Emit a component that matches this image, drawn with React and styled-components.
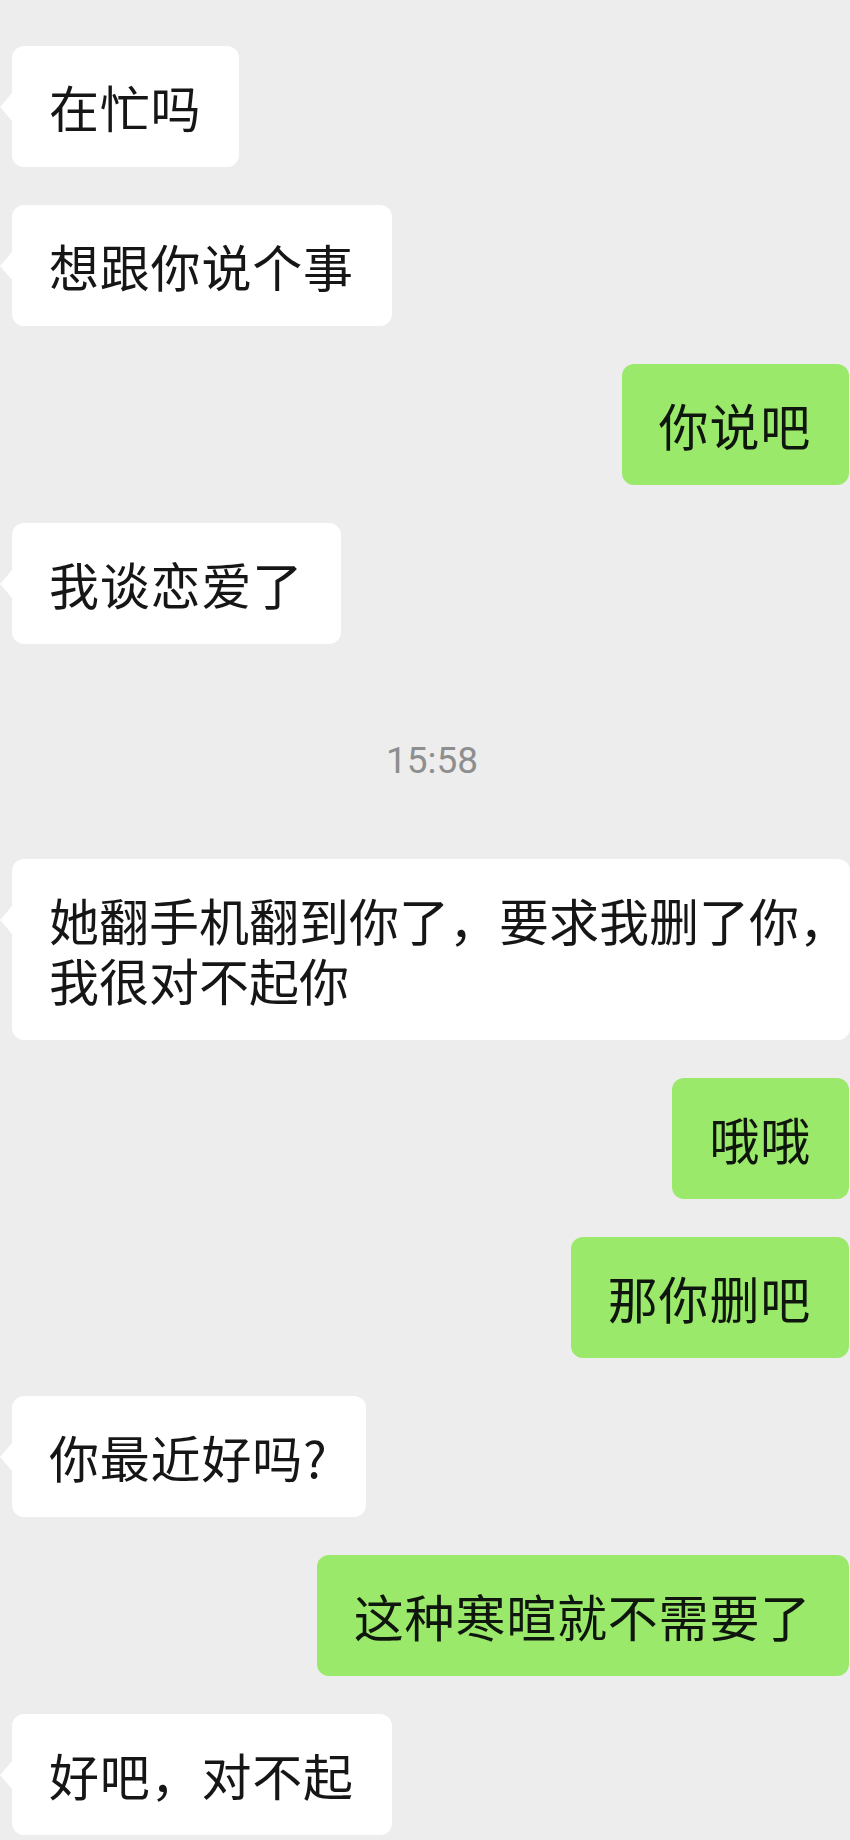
import styled, { createGlobalStyle } from 'styled-components';

const GlobalStyle = createGlobalStyle`
    html, body {
        margin: 0;
        padding: 0;
        background: #ededed;
        overflow: hidden;
    }
`;

const Chat = styled.div`
    width: 850px;
    min-height: 1840px;
    box-sizing: border-box;
    padding: 46px 0 7px;
    display: flex;
    flex-direction: column;
    gap: 38px;
    background: #ededed;
    font-family: "Noto Sans CJK SC", "Noto Sans", sans-serif;
`;

const Row = styled.div`
    display: flex;
    justify-content: ${(p) => (p.$mine ? 'flex-end' : 'flex-start')};
    padding: ${(p) => (p.$mine ? '0 1px 0 0' : '0 0 0 12px')};
`;

const Bubble = styled.div`
    position: relative;
    box-sizing: border-box;
    max-width: 838px;
    padding: 30px ${(p) => (p.$wide ? '0' : '38px')} 31px 37px;
    border-radius: 12px;
    background: ${(p) => (p.$mine ? '#9be96b' : '#ffffff')};
    color: ${(p) => (p.$mine ? '#0f160d' : '#161616')};
    font-size: 50px;
    line-height: 60px;
    letter-spacing: ${(p) => (p.$wide ? '0' : '0.8px')};
    white-space: pre-wrap;

    &::before {
        content: ${(p) => (p.$mine ? 'none' : '""')};
        position: absolute;
        left: -12px;
        top: 46px;
        width: 0;
        height: 0;
        border-top: 15px solid transparent;
        border-bottom: 15px solid transparent;
        border-right: 13px solid #ffffff;
    }
`;

const TimeLabel = styled.div`
    padding: 59px 0 40px 14px;
    text-align: center;
    font-family: Roboto, "Liberation Sans", sans-serif;
    font-size: 37px;
    line-height: 40px;
    color: #8e8e8e;
`;

const messages = [
    { id: 1, text: '在忙吗' },
    { id: 2, text: '想跟你说个事' },
    { id: 3, text: '你说吧', mine: true },
    { id: 4, text: '我谈恋爱了' },
    { id: 5, time: '15:58' },
    { id: 6, text: '她翻手机翻到你了，要求我删了你，我很对不起你', wide: true },
    { id: 7, text: '哦哦', mine: true },
    { id: 8, text: '那你删吧', mine: true },
    { id: 9, text: '你最近好吗?' },
    { id: 10, text: '这种寒暄就不需要了', mine: true },
    { id: 11, text: '好吧，对不起' },
];

function App() {
    return (
        <>
            <GlobalStyle />
            <Chat>
                {messages.map((m) =>
                    m.time ? (
                        <TimeLabel key={m.id}>{m.time}</TimeLabel>
                    ) : (
                        <Row key={m.id} $mine={m.mine}>
                            <Bubble $mine={m.mine} $wide={m.wide}>
                                {m.text}
                            </Bubble>
                        </Row>
                    )
                )}
            </Chat>
        </>
    );
}

export default App;
